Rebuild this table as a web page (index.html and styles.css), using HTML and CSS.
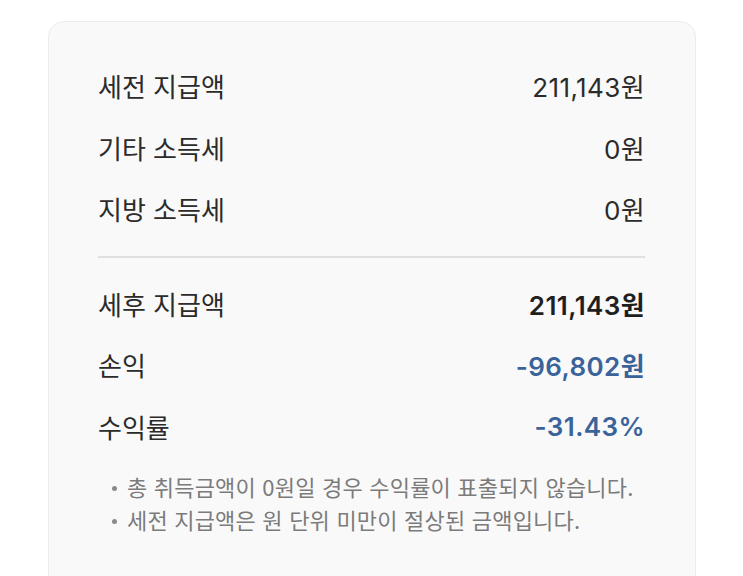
FILE: index.html
```html
<!DOCTYPE html>
<html lang="ko">
<head>
  <meta charset="UTF-8" />
  <meta name="viewport" content="width=device-width, initial-scale=1.0"/>
  <title>수익 상세</title>
  <link rel="stylesheet" href="styles.css">
</head>
<body>
  <div class="card">
    <div class="rows">
      <div class="row"><span>세전 지급액</span><span class="value">211,143원</span></div>
      <div class="row"><span>기타 소득세</span><span class="value">0원</span></div>
      <div class="row"><span>지방 소득세</span><span class="value">0원</span></div>
    </div>
    <hr class="divider">
    <div class="rows">
      <div class="row"><span>세후 지급액</span><span class="value strong">211,143원</span></div>
      <div class="row"><span>손익</span><span class="value loss">-96,802원</span></div>
      <div class="row"><span>수익률</span><span class="value loss">-31.43%</span></div>
    </div>
    <ul class="notes">
      <li>총 취득금액이 0원일 경우 수익률이 표출되지 않습니다.</li>
      <li>세전 지급액은 원 단위 미만이 절상된 금액입니다.</li>
    </ul>
  </div>
</body>
</html>
```

FILE: styles.css
```css
body {
  margin: 0;
  background: #fff;
  font-family: "Noto Sans CJK KR", "Noto Sans", sans-serif;
  color: #2b2b2b;
}

.card {
  margin: 21px 0 0 48px;
  width: 547px;
  height: 600px;
  padding: 33px 50px 0 49px;
  background: #f9f9f9;
  border: 1px solid #ececec;
  border-radius: 16px;
}

.row {
  display: flex;
  justify-content: space-between;
  align-items: center;
  height: 61.5px;
  font-size: 26px;
}

.value {
  font-family: Inter, "Noto Sans CJK KR", sans-serif;
  font-size: 26px;
  letter-spacing: 0.4px;
}

.value.strong {
  font-weight: 600;
  color: #1f1f1f;
}

.value.loss {
  font-weight: 600;
  color: #3a6399;
}

.divider {
  border: none;
  border-top: 2px solid #e0e0e0;
  margin: 16px 0 15px;
}

.notes {
  list-style: none;
  margin: 13px 0 0;
  padding: 0 0 0 13px;
  font-size: 22px;
  letter-spacing: 0.2px;
  color: #7b7b7b;
}

.notes li {
  position: relative;
  height: 33px;
  line-height: 33px;
  padding-left: 16px;
}

.notes li::before {
  content: "";
  position: absolute;
  left: 1px;
  top: 16px;
  width: 5px;
  height: 5px;
  border-radius: 50%;
  background: #8a8a8a;
}
```
